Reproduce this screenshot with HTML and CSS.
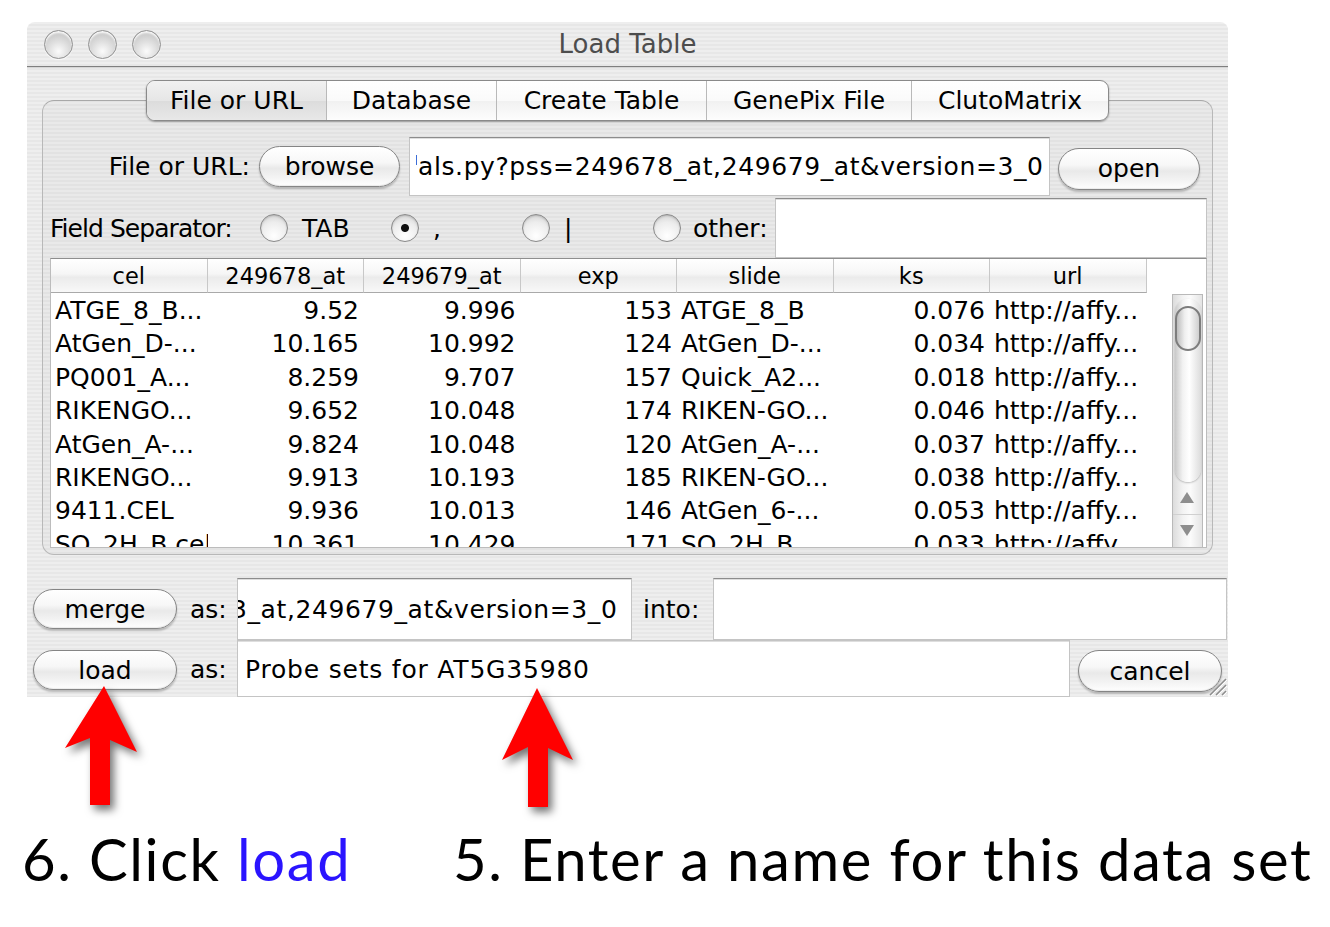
FILE: index.html
```html
<!DOCTYPE html>
<html lang="en">
<head>
<meta charset="utf-8">
<title>Load Table</title>
<link rel="stylesheet" href="styles.css">
</head>
<body>
<div class="page">
  <div class="window">
    <div class="titlebar">
      <div class="lights"><span class="light"></span><span class="light"></span><span class="light"></span></div>
      <div class="title">Load Table</div>
    </div>
    <div class="content">
      <div class="tabs">
        <div class="tab tab-file active">File or URL</div>
        <div class="tab tab-db">Database</div>
        <div class="tab tab-create">Create Table</div>
        <div class="tab tab-gpx">GenePix File</div>
        <div class="tab tab-cluto">ClutoMatrix</div>
      </div>
      <div class="tabbox">
        <div class="row-file">
          <div class="lbl lbl-file">File or URL:</div>
          <div class="btn btn-browse">browse</div>
          <div class="field field-url"><span class="caret"></span>als.py?pss=249678_at,249679_at&amp;version=3_0</div>
          <div class="btn btn-open">open</div>
        </div>
        <div class="row-sep">
          <div class="lbl lbl-sep">Field Separator:</div>
          <div class="opt opt-first"><span class="radio"></span><span>TAB</span></div>
          <div class="opt"><span class="radio checked"></span><span>,</span></div>
          <div class="opt"><span class="radio"></span><span>|</span></div>
          <div class="opt opt-other"><span class="radio"></span><span>other:</span></div>
          <div class="field field-other"></div>
        </div>
        <div class="table">
          <div class="thead">
            <div class="th">cel</div>
            <div class="th">249678_at</div>
            <div class="th">249679_at</div>
            <div class="th">exp</div>
            <div class="th">slide</div>
            <div class="th">ks</div>
            <div class="th">url</div>
          </div>
          <div class="tbody">
            <div class="rows">
              <div class="tr"><div class="td l">ATGE_8_B...</div><div class="td r">9.52</div><div class="td r">9.996</div><div class="td r">153</div><div class="td l">ATGE_8_B</div><div class="td r">0.076</div><div class="td l">http://affy...</div></div>
              <div class="tr"><div class="td l">AtGen_D-...</div><div class="td r">10.165</div><div class="td r">10.992</div><div class="td r">124</div><div class="td l">AtGen_D-...</div><div class="td r">0.034</div><div class="td l">http://affy...</div></div>
              <div class="tr"><div class="td l">PQ001_A...</div><div class="td r">8.259</div><div class="td r">9.707</div><div class="td r">157</div><div class="td l">Quick_A2...</div><div class="td r">0.018</div><div class="td l">http://affy...</div></div>
              <div class="tr"><div class="td l">RIKENGO...</div><div class="td r">9.652</div><div class="td r">10.048</div><div class="td r">174</div><div class="td l">RIKEN-GO...</div><div class="td r">0.046</div><div class="td l">http://affy...</div></div>
              <div class="tr"><div class="td l">AtGen_A-...</div><div class="td r">9.824</div><div class="td r">10.048</div><div class="td r">120</div><div class="td l">AtGen_A-...</div><div class="td r">0.037</div><div class="td l">http://affy...</div></div>
              <div class="tr"><div class="td l">RIKENGO...</div><div class="td r">9.913</div><div class="td r">10.193</div><div class="td r">185</div><div class="td l">RIKEN-GO...</div><div class="td r">0.038</div><div class="td l">http://affy...</div></div>
              <div class="tr"><div class="td l">9411.CEL</div><div class="td r">9.936</div><div class="td r">10.013</div><div class="td r">146</div><div class="td l">AtGen_6-...</div><div class="td r">0.053</div><div class="td l">http://affy...</div></div>
              <div class="tr"><div class="td l">SO_2H_B.cel</div><div class="td r">10.361</div><div class="td r">10.429</div><div class="td r">171</div><div class="td l">SO_2H_B</div><div class="td r">0.033</div><div class="td l">http://affy...</div></div>
            </div>
            <div class="vscroll">
              <div class="sb-track">
                <div class="sb-pill"><div class="sb-thumb"></div></div>
              </div>
              <div class="sb-btn sb-up"><span class="tri-up"></span></div>
              <div class="sb-btn sb-down"><span class="tri-down"></span></div>
            </div>
          </div>
        </div>
      </div>
      <div class="bottom">
        <div class="brow brow-merge">
          <div class="btn btn-action">merge</div>
          <span class="as">as:</span>
          <div class="field field-merge"><span class="clip">3_at,249679_at&amp;version=3_0</span></div>
          <div class="into">into:</div>
          <div class="field field-into"></div>
        </div>
        <div class="brow brow-load">
          <div class="btn btn-action btn-load">load</div>
          <span class="as">as:</span>
          <div class="field field-load">Probe sets for AT5G35980</div>
          <div class="btn btn-cancel">cancel</div>
        </div>
      </div>
      <svg class="grip" width="24" height="24" viewBox="0 0 24 24">
        <path d="M22 6 L6 22 M22 12 L12 22 M22 18 L18 22" stroke="#8c8c8c" stroke-width="1.5"/>
        <path d="M23 7 L7 23 M23 13 L13 23 M23 19 L19 23" stroke="#ffffff" stroke-width="1"/>
      </svg>
    </div>
  </div>

  <svg class="arrow arrow-load" width="90" height="135" viewBox="0 0 90 135">
    <polygon points="44,6 77,72 50,60 50,125 30,125 30,58 5,68" fill="#ff0000"/>
  </svg>
  <svg class="arrow arrow-name" width="90" height="135" viewBox="0 0 90 135">
    <polygon points="42,6 78,78 53,66 53,125 33,125 33,65 7,78" fill="#ff0000"/>
  </svg>

  <div class="caption">
    <div class="step step-6">6. Click <span class="hl">load</span></div>
    <div class="step step-5">5. Enter a name for this data set</div>
  </div>
</div>
</body>
</html>
```

FILE: styles.css
```css
* { box-sizing: border-box; }

html, body {
  margin: 0;
  padding: 0;
  background: #ffffff;
}

body {
  font-family: "DejaVu Sans", "Liberation Sans", sans-serif;
  font-size: 25px;
  color: #000;
}

.page {
  position: relative;
  width: 1330px;
  height: 927px;
  overflow: hidden;
}

/* ---------- window ---------- */
.window {
  position: relative;
  margin: 22px 0 0 27px;
  width: 1201px;
  height: 675px;
  background: repeating-linear-gradient(to bottom, #eeeeee 0 2px, #e7e7e7 2px 4px);
  border-radius: 8px 8px 0 0;
}

.titlebar {
  height: 45px;
  display: grid;
  align-items: center;
  border-bottom: 1px solid #7f7f7f;
  box-shadow: 0 1px 0 #d6d6d6;
  border-radius: 8px 8px 0 0;
}

.lights, .title { grid-area: 1 / 1; }

.lights {
  display: flex;
  gap: 15px;
  padding-left: 17px;
}

.light {
  width: 29px;
  height: 29px;
  border-radius: 50%;
  border: 1px solid #929292;
  background: radial-gradient(circle at 50% 75%, #fbfbfb 0%, #dcdcdc 45%, #b9b9b9 100%);
  box-shadow: inset 0 2px 2px rgba(255,255,255,0.9), 0 1px 1px rgba(255,255,255,0.7);
}

.title {
  justify-self: center;
  font-size: 26px;
  color: #4d4d4d;
  padding-bottom: 1px;
}

.content {
  padding-top: 13px;
}

/* ---------- tabs ---------- */
.tabs {
  position: relative;
  z-index: 1;
  display: flex;
  width: fit-content;
  height: 41px;
  margin: 0 auto -21px;
  border: 1px solid #8a8a8a;
  border-radius: 9px;
  overflow: hidden;
  box-shadow: 0 1px 2px rgba(0,0,0,0.35);
  background: linear-gradient(#ffffff 0%, #fafafa 50%, #f1f1f1 52%, #fdfdfd 100%);
}

.tab {
  display: flex;
  align-items: center;
  justify-content: center;
  border-left: 1px solid #b9b9b9;
  padding-bottom: 1px;
}

.tab-file { width: 179px; border-left: 0; }
.tab-db { width: 170px; }
.tab-create { width: 210px; }
.tab-gpx { width: 205px; }
.tab-cluto { width: 197px; }

.tab.active {
  background: linear-gradient(#f1f1f1 0%, #e6e6e6 50%, #dcdcdc 52%, #e8e8e8 100%);
}

.tabbox {
  margin: 0 15px;
  height: 455px;
  border: 1px solid #b8b8b8;
  border-top-color: #a8a8a8;
  border-radius: 12px;
  background: rgba(0,0,0,0.02);
  padding: 36px 5px 6px 7px;
}

/* ---------- rows ---------- */
.row-file {
  display: flex;
  align-items: center;
  height: 59px;
}

.lbl {
  width: 200px;
  flex: none;
  text-align: right;
  white-space: nowrap;
}

.row-sep .lbl {
  text-align: left;
  letter-spacing: -0.95px;
}

.btn {
  display: flex;
  align-items: center;
  justify-content: center;
  border: 1px solid #858585;
  border-radius: 999px;
  background: linear-gradient(#ffffff 0%, #f7f7f7 40%, #e9e9e9 55%, #f4f4f4 80%, #ffffff 100%);
  box-shadow: 0 2px 2px rgba(0,0,0,0.22), inset 0 -1px 1px rgba(0,0,0,0.08);
  white-space: nowrap;
  flex: none;
}

.btn-browse { margin-left: 9px; width: 141px; height: 41px; }
.btn-open { margin-left: 8px; width: 142px; height: 42px; margin-top: 4px; }

.field {
  background: #ffffff;
  border: 1px solid #c4c4c4;
  border-top-color: #8c8c8c;
  box-shadow: inset 0 1px 0 #dedede;
  display: flex;
  align-items: center;
  white-space: nowrap;
  overflow: hidden;
}

.field-url {
  margin-left: 9px;
  width: 641px;
  height: 59px;
  padding-left: 6px;
  letter-spacing: 0.6px;
}

.caret {
  display: inline-block;
  width: 1px;
  height: 10px;
  background: #3b6ed8;
  margin-right: 1px;
  align-self: flex-start;
  margin-top: 17px;
}

.row-sep {
  display: flex;
  align-items: center;
  height: 60px;
  margin-top: 2px;
}

.opt {
  display: flex;
  align-items: center;
  gap: 14px;
  width: 131px;
  flex: none;
}

.opt-first { margin-left: 10px; }

.opt-other { width: auto; gap: 12px; }

.radio {
  flex: none;
  width: 28px;
  height: 28px;
  border-radius: 50%;
  border: 1px solid #8a8a8a;
  background: radial-gradient(circle at 50% 80%, #ffffff 0%, #ededed 55%, #cdcdcd 100%);
  box-shadow: inset 0 1px 2px rgba(0,0,0,0.18);
}

.radio.checked {
  background:
    radial-gradient(circle, #111 0 3.5px, rgba(17,17,17,0) 4.5px),
    radial-gradient(circle at 50% 80%, #ffffff 0%, #ededed 55%, #cdcdcd 100%);
}

.field-other {
  margin-left: 7px;
  flex: 1;
  height: 60px;
}

/* ---------- table ---------- */
.table {
  height: 290px;
  background: #ffffff;
  border: 1px solid #bcbcbc;
  border-top-color: #8e8e8e;
  display: flex;
  flex-direction: column;
  overflow: hidden;
}

.thead {
  display: grid;
  grid-template-columns: repeat(7, 156.5px);
  height: 34px;
  flex: none;
}

.th {
  display: flex;
  align-items: center;
  justify-content: center;
  font-size: 22.5px;
  border-right: 1px solid #c8c8c8;
  border-bottom: 1px solid #a9a9a9;
  background: linear-gradient(#ffffff 0%, #f6f6f6 45%, #ebebeb 55%, #f8f8f8 100%);
}

.tbody {
  flex: 1;
  display: flex;
  min-height: 0;
}

.rows {
  width: 1095.5px;
  flex: none;
  overflow: hidden;
  padding-top: 1px;
}

.tr {
  display: grid;
  grid-template-columns: repeat(7, 156.5px);
  height: 33.4px;
  line-height: 33.4px;
}

.td {
  white-space: nowrap;
  overflow: hidden;
}

.td.l { text-align: left; padding-left: 4px; }
.td.r { text-align: right; padding-right: 5px; }

/* scrollbar */
.vscroll {
  margin: 1px 0 0 25px;
  width: 31px;
  display: flex;
  flex-direction: column;
  border: 1px solid #b9b9b9;
  border-bottom: 0;
  background: linear-gradient(to right, #dcdcdc 0%, #f3f3f3 35%, #fbfbfb 60%, #e4e4e4 100%);
}

.sb-track {
  flex: 1;
  padding: 4px 1px 0 2px;
}

.sb-pill {
  height: 183px;
  border-radius: 14px;
  background: linear-gradient(to right, #c9c9c9 0%, #f2f2f2 30%, #ffffff 55%, #dcdcdc 100%);
  box-shadow: 0 1px 2px rgba(0,0,0,0.25);
  padding-top: 7px;
}

.sb-thumb {
  height: 45px;
  border: 2px solid #7d7d7d;
  border-radius: 14px;
  background: linear-gradient(to right, #bdbdbd 0%, #efefef 35%, #fafafa 55%, #cfcfcf 100%);
}

.sb-btn {
  height: 33px;
  display: flex;
  align-items: center;
  justify-content: center;
}

.sb-up { border-bottom: 1px solid #d0d0d0; }

.tri-up {
  width: 0; height: 0;
  border-left: 7px solid transparent;
  border-right: 7px solid transparent;
  border-bottom: 11px solid #8e8e8e;
}

.tri-down {
  width: 0; height: 0;
  border-left: 7px solid transparent;
  border-right: 7px solid transparent;
  border-top: 11px solid #8e8e8e;
}

/* ---------- bottom rows ---------- */
.bottom {
  padding: 23px 0 0 6px;
}

.brow {
  display: flex;
  align-items: center;
}

.brow-merge { height: 62px; }
.brow-load { height: 57px; }

.btn-action { width: 144px; height: 40px; }
.btn-load { margin-top: 3px; }

.as {
  width: 60px;
  padding-left: 13px;
  flex: none;
}

.brow-load .as { padding-top: 2px; }

.field-merge {
  width: 395px;
  height: 62px;
  flex: none;
  letter-spacing: 0.6px;
}

.clip { margin-left: -7px; }

.into {
  width: 81px;
  height: 62px;
  display: flex;
  align-items: center;
  padding-left: 11px;
  flex: none;
}

.field-into {
  flex: 1;
  height: 62px;
  margin-right: 1px;
}

.field-load {
  width: 833px;
  height: 57px;
  padding-left: 7px;
  padding-top: 1px;
  border-top-color: #c4c4c4;
  letter-spacing: 0.8px;
  flex: none;
}

.btn-cancel {
  margin-left: 8px;
  width: 144px;
  height: 42px;
  margin-top: 5px;
}

.grip {
  position: absolute;
  right: 0;
  bottom: 0;
}

/* ---------- annotations ---------- */
.arrow {
  position: absolute;
  filter: drop-shadow(4px 5px 4px rgba(0,0,0,0.55));
}

.arrow-load { left: 60px; top: 680px; }
.arrow-name { left: 495px; top: 682px; }

.caption {
  display: flex;
  margin-top: 127px;
  padding-left: 22px;
  font-family: "Lato", "Open Sans", sans-serif;
  font-size: 58px;
  line-height: 70px;
  letter-spacing: 1.6px;
  white-space: nowrap;
}

.step-6 { width: 431px; flex: none; }
.hl { color: #2a14ff; }
```
